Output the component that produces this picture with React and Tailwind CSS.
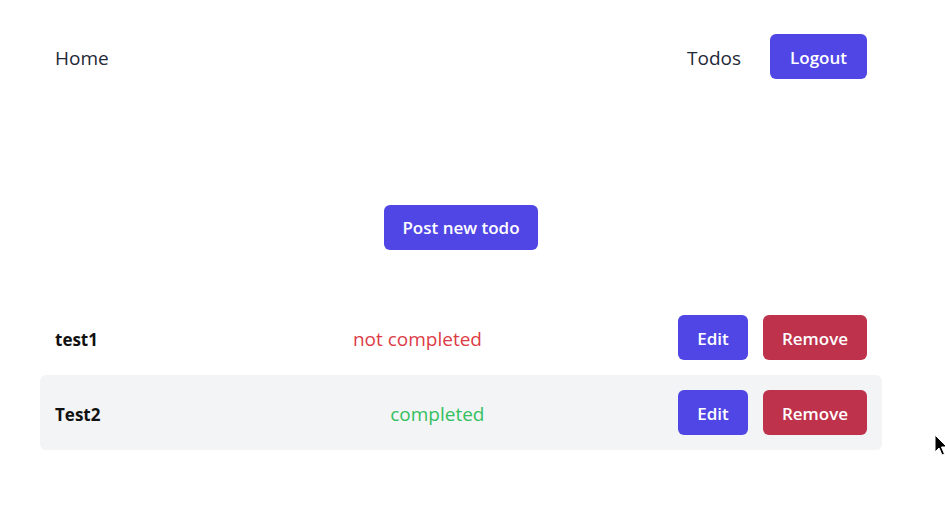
export default function App() {
  const todos = [
    { name: "test1", done: false },
    { name: "Test2", done: true },
  ];
  return (
    <div
      className="relative w-[945px] h-[528px] bg-white overflow-hidden"
      style={{ fontFamily: '"Open Sans", "Noto Sans", sans-serif' }}
    >
      <div className="ml-[40px] w-[842px]">
        <nav className="flex items-center justify-between px-[15px] pt-[34px] h-[79px]">
          <a className="pt-[4px] text-[19px] text-[#1f2937]">Home</a>
          <div className="flex items-center gap-[29px]">
            <a className="pt-[4px] text-[19px] text-[#1f2937]">Todos</a>
            <button className="h-[45px] w-[97px] pt-[3px] rounded-md bg-[#4f46e5] text-white text-[17px] font-semibold">
              Logout
            </button>
          </div>
        </nav>
        <div className="flex justify-center pt-[126px]">
          <button className="h-[45px] w-[154px] pt-[1px] rounded-md bg-[#4f46e5] text-white text-[17px] font-semibold">
            Post new todo
          </button>
        </div>
        <div className="mt-[50px]">
          {todos.map((t, i) => (
            <div
              key={t.name}
              className={
                "flex items-center justify-between h-[75px] px-[15px] rounded-md " +
                (i === 1 ? "bg-[#f3f4f6]" : "")
              }
            >
              <div className="flex items-center pt-[4px]">
                <span className="text-[17px] font-bold text-[#111]">{t.name}</span>
                <span
                  className={
                    "w-[384px] text-right text-[19px] " +
                    (t.done ? "text-[#34c05e]" : "text-[#dc3c46]")
                  }
                >
                  {t.done ? "completed" : "not completed"}
                </span>
              </div>
              <div className="flex items-center gap-[15px]">
                <button className="h-[45px] w-[70px] pt-[3px] rounded-md bg-[#4f46e5] text-white text-[17px] font-semibold">
                  Edit
                </button>
                <button className="h-[45px] w-[104px] pt-[3px] rounded-md bg-[#be324b] text-white text-[17px] font-semibold">
                  Remove
                </button>
              </div>
            </div>
          ))}
        </div>
      </div>
      <svg
        className="absolute left-[934px] top-[434px]"
        width="14"
        height="22"
        viewBox="0 0 14 22"
      >
        <path
          d="M1 1 L1 18 L5 14 L8 21 L10.5 20 L7.5 13 L13 13 Z"
          fill="#000"
          stroke="#fff"
          strokeWidth="1"
        />
      </svg>
    </div>
  );
}
